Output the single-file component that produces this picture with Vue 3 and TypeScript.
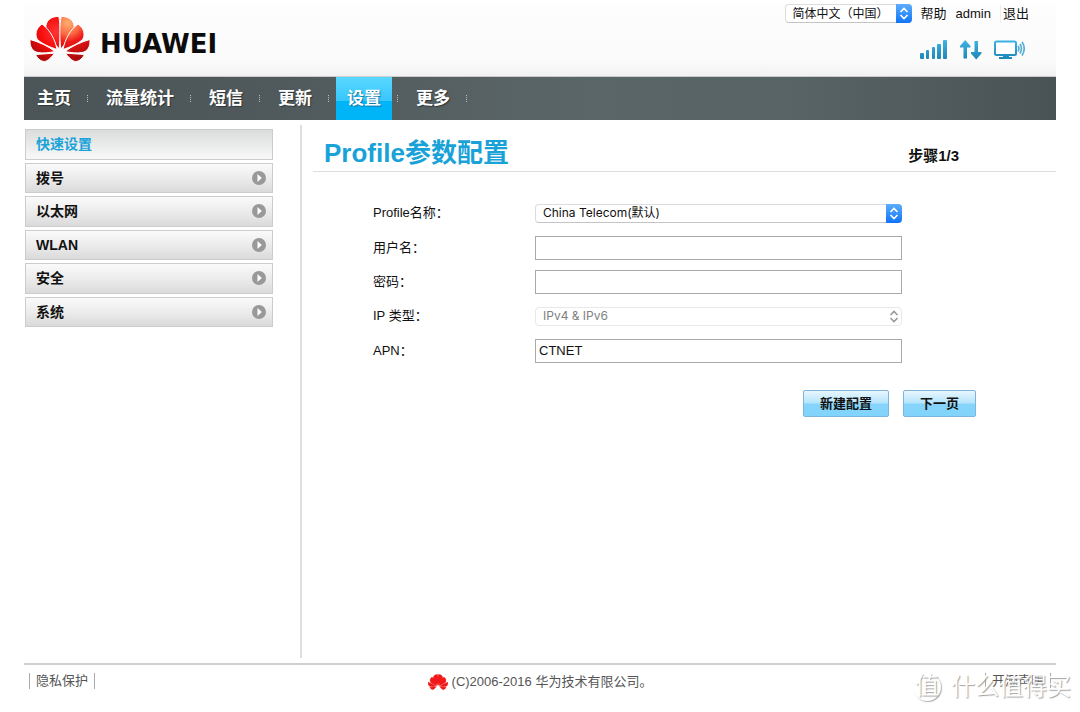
<script setup lang="ts">
import { ref } from 'vue'

interface Item {
  label: string
  active?: boolean
}

const navItems: Item[] = [
  { label: '主页' },
  { label: '流量统计' },
  { label: '短信' },
  { label: '更新' },
  { label: '设置', active: true },
  { label: '更多' },
]

const sideItems: Item[] = [
  { label: '快速设置', active: true },
  { label: '拨号' },
  { label: '以太网' },
  { label: 'WLAN' },
  { label: '安全' },
  { label: '系统' },
]

const petals: string[] = [
  'M29.2 33C30.5 22 30.5 8 28.8 .5C22 0 15 4.5 16 12C17 18 24 27 29.2 33Z',
  'M27 33.5C25 23 20 14 12 8C6 12 4.5 19 7.5 23.5C12 28 20 31 27 33.5Z',
  'M25 35.5C18 30 9 26 .2 23.5C-.8 30 2.5 35.8 8 36.5C13 37.5 20 36.5 25 35.5Z',
  'M24.5 37.2L5.500 38.500C8 43 12 46.5 16 45.2C19 44 22 40.5 24.5 37.2Z',
]

const language = ref('zh')
const profile = ref('ct')
const username = ref('')
const password = ref('')
const ipType = ref('both')
const apn = ref('CTNET')
</script>

<template>
  <div class="page">
    <header class="header">
      <a href="#" class="brand">
        <svg class="brand-mark" viewBox="0 0 60 46" aria-hidden="true">
          <defs>
            <radialGradient id="petal-left" gradientUnits="userSpaceOnUse" cx="26" cy="16" r="32">
              <stop offset="0" stop-color="#ff3434" />
              <stop offset="0.5" stop-color="#f60c0c" />
              <stop offset="1" stop-color="#a8080a" />
            </radialGradient>
            <radialGradient id="petal-right" gradientUnits="userSpaceOnUse" cx="22" cy="7" r="38">
              <stop offset="0" stop-color="#ffb070" />
              <stop offset="0.3" stop-color="#fb6a44" />
              <stop offset="0.5" stop-color="#ee1a18" />
              <stop offset="1" stop-color="#a8080a" />
            </radialGradient>
          </defs>
          <g stroke="#fdfdfd" stroke-width="1">
            <path v-for="d in petals" :key="d" :d="d" fill="url(#petal-left)" />
            <g transform="translate(60 0) scale(-1 1)">
              <path v-for="d in petals" :key="d" :d="d" fill="url(#petal-right)" />
            </g>
          </g>
        </svg>
        <span class="brand-name">HUAWEI</span>
      </a>
      <div class="tools">
        <div class="tool-row">
          <span class="select-box language">
            <select v-model="language" aria-label="语言">
              <option value="zh">简体中文（中国）</option>
            </select>
            <svg class="stepper" viewBox="0 0 16 18" aria-hidden="true">
              <path d="M4.5 7.5L8 4L11.5 7.5M4.5 10.5L8 14L11.5 10.5" />
            </svg>
          </span>
          <a href="#">帮助</a>
          <a href="#">admin</a>
          <a href="#" class="logout">退出</a>
        </div>
        <div class="status-row">
          <svg width="28" height="20" viewBox="0 0 28 20" aria-label="信号">
            <g fill="url(#status-blue)">
              <rect x="0" y="13" width="4" height="6" rx="1" />
              <rect x="6" y="10" width="3" height="9" rx="1" />
              <rect x="12" y="7" width="3" height="12" rx="1" />
              <rect x="17" y="4" width="4" height="15" rx="1" />
              <rect x="23" y="0" width="4" height="19" rx="1" />
            </g>
            <defs>
              <linearGradient id="status-blue" gradientUnits="userSpaceOnUse" x1="0" y1="0" x2="0" y2="20">
                <stop offset="0" stop-color="#3fb4e4" />
                <stop offset="1" stop-color="#1c84b4" />
              </linearGradient>
            </defs>
          </svg>
          <svg width="22" height="20" viewBox="0 0 22 20" aria-label="数据">
            <g fill="url(#status-blue)">
              <path d="M5.200 0L10.500 6V7.500H7V18.500H3.500V7.500H0V6Z" />
              <path d="M14.500 1H18V12H21.500V13.500L16.200 19.500L11 13.500V12H14.500Z" />
            </g>
          </svg>
          <svg width="32" height="20" viewBox="0 0 32 20" aria-label="终端">
            <rect x="1" y="1.500" width="21" height="13.500" rx="1.500" fill="#fff" stroke="url(#status-blue)" stroke-width="2" />
            <path d="M9 16H15V17H18V19H5V17H9Z" fill="url(#status-blue)" />
            <path d="M24 6Q25.800 8.500 24 11.500M26 4Q28.800 8.500 26 13.500M28 2Q32.500 8.500 28 15.500" fill="none" stroke="#55afd4" stroke-width="1.700" />
          </svg>
        </div>
      </div>
    </header>

    <nav class="nav">
      <ul>
        <li v-for="item in navItems" :key="item.label">
          <a href="#" :class="{ active: item.active }">{{ item.label }}</a>
          <span class="dots"></span>
        </li>
      </ul>
    </nav>

    <div class="content">
      <aside class="side">
        <ul>
          <li v-for="item in sideItems" :key="item.label">
            <a href="#" :class="{ active: item.active }">
              {{ item.label }}
              <svg v-if="!item.active" width="14" height="14" viewBox="0 0 14 14" aria-hidden="true">
                <circle cx="7" cy="7" r="7" fill="#999" />
                <path d="M5.500 3L9.800 7L5.500 11Z" fill="#fff" />
              </svg>
            </a>
          </li>
        </ul>
      </aside>

      <main class="main">
        <div class="title-bar">
          <h1>Profile参数配置</h1>
          <span class="step">步骤1/3</span>
        </div>
        <form @submit.prevent>
          <div class="fields">
            <label for="profile">Profile名称：</label>
            <span class="select-box">
              <select id="profile" v-model="profile">
                <option value="ct">China Telecom(默认)</option>
              </select>
              <svg class="stepper" viewBox="0 0 16 18" aria-hidden="true">
                <path d="M4.5 7.5L8 4L11.5 7.5M4.5 10.5L8 14L11.5 10.5" />
              </svg>
            </span>
            <label for="username">用户名：</label>
            <input id="username" v-model="username" type="text" />
            <label for="password">密码：</label>
            <input id="password" v-model="password" type="password" />
            <label for="ip-type">IP 类型：</label>
            <span class="select-box disabled">
              <select id="ip-type" v-model="ipType" disabled>
                <option value="both">IPv4 &amp; IPv6</option>
              </select>
              <svg class="stepper" viewBox="0 0 16 18" aria-hidden="true">
                <path d="M4.5 7.5L8 4L11.5 7.5M4.5 10.5L8 14L11.5 10.5" />
              </svg>
            </span>
            <label for="apn">APN：</label>
            <input id="apn" v-model="apn" type="text" />
          </div>
          <div class="actions">
            <button type="button">新建配置</button>
            <button type="submit">下一页</button>
          </div>
        </form>
      </main>
    </div>

    <footer class="footer">
      <a href="#" class="barred">隐私保护</a>
      <span class="copyright">
        <svg width="20" height="16" viewBox="0 0 60 46" aria-hidden="true">
          <g fill="#f01818" stroke="#f01818" stroke-width="1">
            <path v-for="d in petals" :key="d" :d="d" />
            <g transform="translate(60 0) scale(-1 1)">
              <path v-for="d in petals" :key="d" :d="d" />
            </g>
          </g>
        </svg>
        (C)2006-2016 华为技术有限公司。
      </span>
      <a href="#" class="barred">开源声明</a>
    </footer>

    <div class="watermark">
      <span class="seal">值</span>
      <span>什么值得买</span>
    </div>
  </div>
</template>

<style>
body {
  margin: 0;
  background: #fff;
}
</style>

<style scoped>
.page {
  position: relative;
  box-sizing: border-box;
  display: flex;
  flex-direction: column;
  min-height: 100vh;
  padding: 0 24px;
  color: #111;
  font: 13px/18px "Liberation Sans", "Noto Sans CJK SC", sans-serif;
}

.page a {
  color: inherit;
  text-decoration: none;
}

ul {
  margin: 0;
  padding: 0;
  list-style: none;
}

.header {
  display: flex;
  justify-content: space-between;
  box-sizing: border-box;
  height: 77px;
  padding: 4px 27px 0 6px;
  border-bottom: 1px solid #ccc;
  background: linear-gradient(#fff 4px, #fdfdfd 6px, #fbfbfb 60px, #f2f2f2);
}

.brand {
  display: flex;
  align-items: center;
  align-self: flex-start;
  gap: 10px;
  margin-top: 11px;
}

.brand-mark {
  width: 60px;
  height: 46px;
}

.page .brand-name {
  padding-top: 10px;
  color: #0c0c0c;
  font: bold 26px/38px "DejaVu Sans", sans-serif;
}

.tools {
  display: flex;
  flex-direction: column;
  align-items: flex-end;
  gap: 17px;
}

.tool-row {
  display: flex;
  align-items: center;
  gap: 9px;
}

.logout {
  padding-left: 2px;
  border-left: 1px solid #eee;
}

.status-row {
  display: flex;
  gap: 12px;
  margin-right: 3px;
}

.select-box {
  position: relative;
  display: flex;
}

.select-box select {
  appearance: none;
  width: 100%;
  height: 19px;
  margin: 0;
  padding: 0 24px 0 7px;
  border: 1px solid #dcdcdc;
  border-bottom-color: #c4c4c4;
  border-radius: 4px;
  background: #fff;
  color: #111;
  font: 12px/16px Inter, "Noto Sans CJK SC", sans-serif;
}

.language {
  width: 127px;
}

.stepper {
  position: absolute;
  top: 0;
  right: 0;
  width: 16px;
  height: 19px;
  border-radius: 0 4px 4px 0;
  background: linear-gradient(#5fadfb, #0f74f8);
  fill: none;
  stroke: #fff;
  stroke-width: 1.6;
  pointer-events: none;
}

.disabled select {
  border-color: #e8e8e8;
  color: #808080;
  opacity: 1;
}

.disabled .stepper {
  background: none;
  stroke: #999;
}

.nav {
  height: 43px;
  padding-left: 2px;
  background: linear-gradient(90deg, #4b5456, #505a5c 25%, #5b6668 55%, #586365 75%, #495355);
}

.nav ul,
.nav li {
  display: flex;
  align-items: center;
}

.nav a {
  padding: 0 11px;
  color: #fff;
  font-size: 17px;
  font-weight: bold;
  line-height: 43px;
  text-shadow: 1px 1px 1px #2f3638;
}

.nav a.active {
  background: linear-gradient(#59d8ff, #38c6fc 55%, #00b4f8 56%, #00b4f8);
  text-shadow: 1px 1px 1px #1573a0;
}

.dots {
  width: 1px;
  height: 8px;
  margin: 0 7px 0 5px;
  background: repeating-linear-gradient(#b8bebf 0 1px, transparent 1px 2px);
}

.content {
  display: flex;
  flex: 1;
  padding: 5px 0;
}

.side {
  box-sizing: border-box;
  width: 278px;
  padding: 4px 27px 0 1px;
  border-right: 2px solid #dedede;
}

.side ul {
  display: grid;
  grid-auto-rows: 1fr;
  gap: 3px;
  min-height: 198px;
}

.side li {
  display: flex;
}

.side a {
  display: flex;
  flex: 1;
  align-items: center;
  justify-content: space-between;
  padding: 0 6px 0 10px;
  border: 1px solid #ccc;
  background: linear-gradient(#fafafa, #ececec 50%, #dadada);
  font-size: 14px;
  font-weight: bold;
}

.side a.active {
  background: linear-gradient(#dadddc, #f8f8f8);
  color: #1aa3d8;
}

.main {
  flex: 1;
  margin-left: 11px;
}

.title-bar {
  display: flex;
  align-items: center;
  justify-content: space-between;
  padding: 10px 97px 0 11px;
  border-bottom: 1px solid #ddd;
}

h1 {
  margin: 0;
  color: #18a2d8;
  font-size: 26px;
  line-height: 36px;
}

.step {
  padding-top: 6px;
  font-size: 15px;
  font-weight: bold;
}

.fields {
  display: grid;
  grid-template-columns: 162px minmax(0, 367px);
  grid-auto-rows: 1fr;
  align-items: center;
  min-height: 172px;
  padding: 24px 0 0 60px;
}

.fields input {
  box-sizing: border-box;
  width: 100%;
  height: 24px;
  padding: 0 3px;
  border: 1px solid #aaa;
  background: #fff;
  color: #111;
  font: inherit;
}

.actions {
  display: flex;
  justify-content: flex-end;
  gap: 14px;
  padding: 22px 80px 0 0;
}

.actions button {
  height: 27px;
  padding: 0 16px;
  border: 1px solid #7fb4dc;
  border-radius: 2px;
  background: linear-gradient(#e8f6fe, #b5e4fc 48%, #86d4fb 52%, #80d4fc);
  color: #111;
  font: inherit;
  font-weight: bold;
}

.footer {
  display: grid;
  grid-template-columns: 1fr auto 1fr;
  align-items: start;
  box-sizing: border-box;
  height: 49px;
  padding: 8px 5px 0;
  border-top: 2px solid #d0d0d0;
  color: #555;
}

.barred {
  justify-self: start;
  padding: 0 6px;
  border: solid #aaa;
  border-width: 0 1px;
  line-height: 16px;
}

.barred:last-child {
  justify-self: end;
}

.copyright {
  display: flex;
  align-items: center;
  gap: 4px;
}

.watermark {
  position: absolute;
  right: 9px;
  bottom: 9px;
  display: flex;
  align-items: center;
  gap: 10px;
  color: #fff;
  font-size: 24px;
  line-height: 32px;
  opacity: 0.9;
  text-shadow: 1px 1px 1px #999;
  pointer-events: none;
}

.seal {
  width: 28px;
  height: 28px;
  border-radius: 50%;
  box-shadow: 1px 1px 1px #aaa;
  line-height: 26px;
  text-align: center;
}
</style>
